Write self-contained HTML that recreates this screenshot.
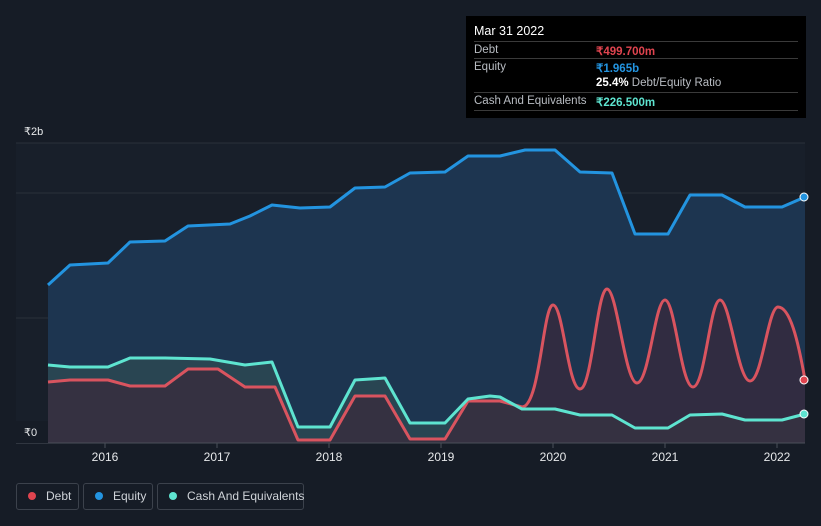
<!DOCTYPE html>
<html><head><meta charset="utf-8"><style>
body{margin:0;background:#161c26;font-family:"Liberation Sans",sans-serif;}
.wrap{position:relative;width:821px;height:526px;overflow:hidden;}
.tip{position:absolute;left:466px;top:16px;width:340px;height:102px;background:#000;color:#b8bcc2;font-size:11.5px;}
.tip .h{position:absolute;left:8px;top:8px;color:#fff;font-size:12.5px;}
.row{position:absolute;left:8px;width:324px;height:17px;border-top:1px solid #3a3a3a;}
.row span{position:absolute;top:2px;white-space:nowrap;}
.lg{position:absolute;top:483px;height:27px;border:1px solid #3c424c;border-radius:3px;color:#cfd3d8;font-size:12px;line-height:25px;box-sizing:border-box;white-space:nowrap;}
.dot{display:inline-block;width:8px;height:8px;border-radius:50%;margin:0 10px 0 11px;}
</style></head><body><div class="wrap">
<svg width="821" height="526" style="position:absolute;left:0;top:0">
<rect x="16" y="143" width="789" height="300" fill="#181f2a"/>
<line x1="16" y1="143" x2="805" y2="143" stroke="#2a313b"/>
<line x1="16" y1="193" x2="805" y2="193" stroke="#2a313b"/>
<line x1="16" y1="318" x2="805" y2="318" stroke="#2a313b"/>
<polygon fill="#1d3550" points="48,285 70,265 108,263 130,242 165,241 188,226 230,224 250,216 272,205 300,208 330,207 355,188 385,187 410,173 445,172 468,156 500,156 525,150 555,150 580,172 612,173 635,234 668,234 690,195 722,195 745,207 782,207 805,197 805,443 48,443"/>
<polygon fill="#2d4a52" fill-opacity="0.8" points="48,365 70,367 108,367 130,358 165,358 210,359 245,365 272,362 298,427 330,427 355,380 385,378 410,423 445,423 468,399 490,396 500,397 522,409 555,409 580,415 612,415 635,428 668,428 690,415 722,414 745,420 782,420 805,414 805,443 48,443"/>
<path fill="#3a2a3a" fill-opacity="0.7" d="M48,382 L70,380 108,380 130,386 165,386 188,369 218,369 245,387 275,387 298,440 330,440 355,396 385,396 410,439 445,439 468,401 500,401 522,407 C540,407 543,305 553,305 C563,305 568,389 580,389 C592,389 597,289 607,289 C617,289 625,383 637,383 C649,383 655,300 665,300 C675,300 681,387 693,387 C705,387 710,300 720,300 C730,300 738,381 750,381 C762,381 768,307 778,307 C790,307 798,340 805,380 L805,443 L48,443Z"/>
<g fill="none" stroke-width="3" stroke-linejoin="round">
<polyline stroke="#2394e0" points="48,285 70,265 108,263 130,242 165,241 188,226 230,224 250,216 272,205 300,208 330,207 355,188 385,187 410,173 445,172 468,156 500,156 525,150 555,150 580,172 612,173 635,234 668,234 690,195 722,195 745,207 782,207 805,197"/>
<path stroke="#d9545f" d="M48,382 L70,380 108,380 130,386 165,386 188,369 218,369 245,387 275,387 298,440 330,440 355,396 385,396 410,439 445,439 468,401 500,401 522,407 C540,407 543,305 553,305 C563,305 568,389 580,389 C592,389 597,289 607,289 C617,289 625,383 637,383 C649,383 655,300 665,300 C675,300 681,387 693,387 C705,387 710,300 720,300 C730,300 738,381 750,381 C762,381 768,307 778,307 C790,307 798,340 805,380"/>
<polyline stroke="#5ee4d0" points="48,365 70,367 108,367 130,358 165,358 210,359 245,365 272,362 298,427 330,427 355,380 385,378 410,423 445,423 468,399 490,396 500,397 522,409 555,409 580,415 612,415 635,428 668,428 690,415 722,414 745,420 782,420 805,414"/>
</g>
<circle cx="804" cy="197" r="4" fill="#2394e0" stroke="#fff"/>
<circle cx="804" cy="380" r="4" fill="#e0444f" stroke="#fff"/>
<circle cx="804" cy="414" r="4" fill="#5ee4d0" stroke="#fff"/>
<line x1="16" y1="443" x2="805" y2="443" stroke="#4a5059"/>
<g stroke="#4a5059"><line x1="105" y1="443" x2="105" y2="448"/><line x1="217" y1="443" x2="217" y2="448"/><line x1="329" y1="443" x2="329" y2="448"/><line x1="441" y1="443" x2="441" y2="448"/><line x1="553" y1="443" x2="553" y2="448"/><line x1="665" y1="443" x2="665" y2="448"/><line x1="777" y1="443" x2="777" y2="448"/></g>
<g fill="#e6e8ea" font-size="12" text-anchor="middle" font-family="Liberation Sans">
<text x="105" y="461">2016</text><text x="217" y="461">2017</text><text x="329" y="461">2018</text><text x="441" y="461">2019</text><text x="553" y="461">2020</text><text x="665" y="461">2021</text><text x="777" y="461">2022</text>
</g>
<rect x="16" y="421" width="32" height="22" fill="#161c26"/>
<text x="24" y="135" fill="#e6e8ea" font-size="11">₹2b</text>
<text x="24" y="436" fill="#e6e8ea" font-size="11">₹0</text>
</svg>
<div class="tip"><div class="h">Mar 31 2022</div>
<div class="row" style="top:25px"><span>Debt</span><span style="left:122px;color:#e0444f;font-weight:bold">₹499.700m</span></div>
<div class="row" style="top:42px"><span>Equity</span><span style="left:122px;color:#2394e0;font-weight:bold">₹1.965b</span></div>
<div class="row" style="top:59px;border-top:none"><span style="left:122px"><b style="color:#fff">25.4%</b> Debt/Equity Ratio</span></div>
<div class="row" style="top:76px;border-bottom:1px solid #3a3a3a"><span>Cash And Equivalents</span><span style="left:122px;color:#5ee4d0;font-weight:bold">₹226.500m</span></div>
</div>
<div class="lg" style="left:16px;width:63px"><span class="dot" style="background:#e0444f"></span>Debt</div>
<div class="lg" style="left:83px;width:70px"><span class="dot" style="background:#2394e0"></span>Equity</div>
<div class="lg" style="left:157px;width:147px"><span class="dot" style="background:#5ee4d0"></span>Cash And Equivalents</div>
</div></body></html>
